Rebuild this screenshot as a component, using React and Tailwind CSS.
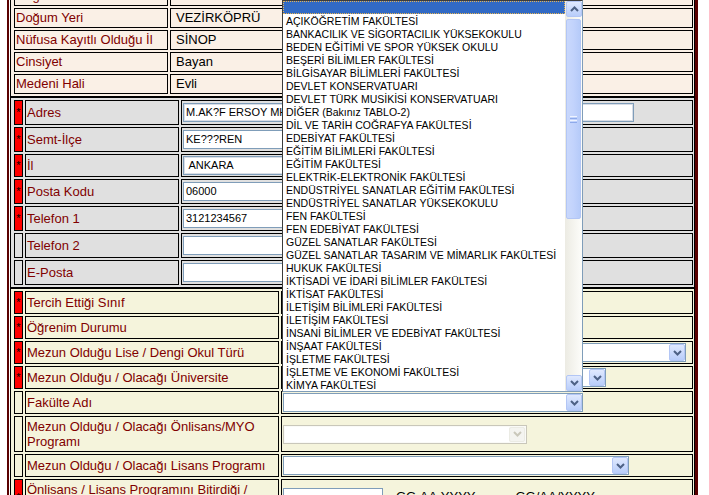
import React from "react";

const FACULTIES = [
  "",
  "AÇIKÖĞRETİM FAKÜLTESİ",
  "BANKACILIK VE SİGORTACILIK YÜKSEKOKULU",
  "BEDEN EĞİTİMİ VE SPOR YÜKSEK OKULU",
  "BEŞERİ BİLİMLER FAKÜLTESİ",
  "BİLGİSAYAR BİLİMLERİ FAKÜLTESİ",
  "DEVLET KONSERVATUARI",
  "DEVLET TÜRK MUSİKİSİ KONSERVATUARI",
  "DİĞER (Bakınız TABLO-2)",
  "DİL VE TARİH COĞRAFYA FAKÜLTESİ",
  "EDEBİYAT FAKÜLTESİ",
  "EĞİTİM BİLİMLERİ FAKÜLTESİ",
  "EĞİTİM FAKÜLTESİ",
  "ELEKTRİK-ELEKTRONİK FAKÜLTESİ",
  "ENDÜSTRİYEL SANATLAR EĞİTİM FAKÜLTESİ",
  "ENDÜSTRİYEL SANATLAR YÜKSEKOKULU",
  "FEN FAKÜLTESİ",
  "FEN EDEBİYAT FAKÜLTESİ",
  "GÜZEL SANATLAR FAKÜLTESİ",
  "GÜZEL SANATLAR TASARIM VE MİMARLIK FAKÜLTESİ",
  "HUKUK FAKÜLTESİ",
  "İKTİSADİ VE İDARİ BİLİMLER FAKÜLTESİ",
  "İKTİSAT FAKÜLTESİ",
  "İLETİŞİM BİLİMLERİ FAKÜLTESİ",
  "İLETİŞİM FAKÜLTESİ",
  "İNSANİ BİLİMLER VE EDEBİYAT FAKÜLTESİ",
  "İNŞAAT FAKÜLTESİ",
  "İŞLETME FAKÜLTESİ",
  "İŞLETME VE EKONOMİ FAKÜLTESİ",
  "KİMYA FAKÜLTESİ",
];

const PERSONAL = [
  ["Doğum Tarihi", "10.02.1987"],
  ["Doğum Yeri", "VEZİRKÖPRÜ"],
  ["Nüfusa Kayıtlı Olduğu İl", "SİNOP"],
  ["Cinsiyet", "Bayan"],
  ["Medeni Hali", "Evli"],
];

const CONTACT = [
  { label: "Adres", req: true, h: "h-[25px]", value: "M.AK?F ERSOY MH", w: "w-[451px]", dbl: true },
  { label: "Semt-İlçe", req: true, h: "h-[25px]", value: "KE???REN", w: "w-[200px]" },
  { label: "İl", req: true, h: "h-[23px]", value: " ANKARA", w: "w-[200px]", dbl: true },
  { label: "Posta Kodu", req: true, h: "h-[25px]", value: "06000", w: "w-[200px]" },
  { label: "Telefon 1", req: true, h: "h-[25px]", value: "3121234567", w: "w-[200px]" },
  { label: "Telefon 2", req: false, h: "h-[25px]", value: "", w: "w-[200px]" },
  { label: "E-Posta", req: false, h: "h-[25px]", value: "", w: "w-[200px]" },
];

const EDUCATION = [
  { label: "Tercih Ettiği Sınıf", req: true, h: "h-[23px]", sel: "w-[160px]" },
  { label: "Öğrenim Durumu", req: true, h: "h-[23px]", sel: "w-[160px]" },
  { label: "Mezun Olduğu Lise / Dengi Okul Türü", req: true, h: "h-[23px]", sel: "w-[403px]" },
  { label: "Mezun Olduğu / Olacağı Üniversite", req: true, h: "h-[23px]", sel: "w-[323px]" },
  { label: "Fakülte Adı", req: false, h: "h-[23px]", sel: "w-[300px]" },
  { label: "Mezun Olduğu / Olacağı Önlisans/MYO Programı", req: false, h: "h-[36px]", sel: "w-[244px]", disabled: true },
  { label: "Mezun Olduğu / Olacağı Lisans Programı", req: false, h: "h-[23px]", sel: "w-[346px]" },
];

function Chevron({ up, color }) {
  return (
    <svg width="9" height="6" viewBox="0 0 9 6">
      <polyline
        points={up ? "1,5 4.5,1.5 8,5" : "1,1 4.5,4.5 8,1"}
        fill="none"
        stroke={color}
        strokeWidth="2"
      />
    </svg>
  );
}

function ArrowBtn({ up, disabled }) {
  return (
    <div
      className={
        disabled
          ? "flex h-full w-[16px] items-center justify-center rounded-[2px] border border-[#ebebe4] bg-[#f4f4f0]"
          : "flex h-full w-[16px] items-center justify-center rounded-[2px] border border-[#b3c6f5] bg-gradient-to-b from-[#e0e9fe] to-[#b8cdfa]"
      }
    >
      <Chevron up={up} color={disabled ? "#cac8bb" : "#4d6185"} />
    </div>
  );
}

function Select({ w, disabled }) {
  return (
    <div
      className={`flex h-[19px] ${w} items-stretch border ${
        disabled ? "border-[#c9c7ba] bg-[#fafaf7] p-[1px]" : "border-[#7f9db9] bg-white"
      }`}
    >
      <div className={disabled ? "flex-1 bg-white" : "flex-1"} />
      <ArrowBtn disabled={disabled} />
    </div>
  );
}

function Input({ w, value, dbl }) {
  return (
    <div
      className={`flex h-[19px] ${w} items-center whitespace-pre border border-[#7f9db9] bg-white pl-[2px] text-[11px] text-black ${
        dbl ? "shadow-[inset_0_0_0_1px_#d8dde6]" : ""
      }`}
    >
      {value}
    </div>
  );
}

function Marker({ req, bg }) {
  return (
    <div
      className={`flex w-[9px] shrink-0 items-center justify-center border border-black text-[11px] leading-none text-black ${
        req ? "bg-[#ff0000]" : bg
      }`}
    >
      {req ? "*" : ""}
    </div>
  );
}

function DropList() {
  return (
    <div className="absolute left-[282px] top-0 flex h-[392px] w-[301px] border border-[#7f9db9] border-l-[#3c3c3c] border-t-[#3c3c3c] bg-white">
      <div className="flex flex-1 flex-col text-[10.5px] text-black">
        {FACULTIES.map((f, i) => (
          <div
            key={i}
            className={
              i === 0
                ? "h-[13px] border border-dotted border-[#e6b452] bg-[#316ac5] pl-[2px] leading-[11px]"
                : "h-[13px] whitespace-nowrap pl-[3px] leading-[15px]"
            }
          >
            {f}
          </div>
        ))}
      </div>
      {/* scrollbar */}
      <div className="flex w-[17px] flex-col bg-gradient-to-r from-[#ecebe3] to-[#fdfdfa] px-[1px]">
        <div className="h-[16px]">
          <ArrowBtn up />
        </div>
        <div className="mt-[2px] flex h-[200px] items-center justify-center rounded-[2px] border border-[#b3c6f5] bg-gradient-to-r from-[#c9d8fc] via-[#c2d3fc] to-[#b6cbf9]">
          <div className="flex flex-col gap-[1px]">
            <div className="h-[1px] w-[7px] bg-[#eef3fe]" />
            <div className="h-[1px] w-[7px] bg-[#8eaaea]" />
            <div className="h-[1px] w-[7px] bg-[#eef3fe]" />
            <div className="h-[1px] w-[7px] bg-[#8eaaea]" />
          </div>
        </div>
        <div className="flex-1" />
        <div className="h-[16px]">
          <ArrowBtn />
        </div>
      </div>
    </div>
  );
}

export default function App() {
  return (
    <div className="relative h-[495px] w-[709px] overflow-hidden bg-white font-['Liberation_Sans',Arial,sans-serif] text-[13px]">
      <div className="-mt-[17px] ml-[7px] w-[691px] border-l-2 border-r-[3px] border-[#5a0000] pb-[40px] pl-[1px]">
        {/* personal info */}
        <div className="flex flex-col gap-[2px] border border-black bg-[#faf0e6] py-[2px] pl-[3px] pr-[1px]">
          {PERSONAL.map(([label, value]) => (
            <div key={label} className="flex h-[20px] gap-[2px]">
              <div className="flex w-[154px] items-center border border-black pl-[1px] text-[#800000]">{label}</div>
              <div className="flex flex-1 items-center border border-black pl-[5px] text-black">{value}</div>
            </div>
          ))}
        </div>

        {/* contact */}
        <div className="flex flex-col gap-[2px] border border-black bg-[#e0e0e0] py-[2px] pl-[3px] pr-[1px]">
          {CONTACT.map((r) => (
            <div key={r.label} className={`flex ${r.h} gap-[2px]`}>
              <Marker req={r.req} bg="bg-[#e0e0e0]" />
              <div className="flex w-[154px] items-center border border-black pl-[1px] text-[#800000]">{r.label}</div>
              <div className="flex flex-1 items-center border border-black pl-[1px]">
                <Input w={r.w} value={r.value} dbl={r.dbl} />
              </div>
            </div>
          ))}
        </div>

        {/* education */}
        <div className="flex flex-col gap-[2px] border border-black bg-[#f5f4dc] py-[2px] pl-[3px] pr-[1px]">
          {EDUCATION.map((r) => (
            <div key={r.label} className={`flex ${r.h} gap-[2px]`}>
              <Marker req={r.req} bg="bg-[#f5f4dc]" />
              <div className="flex w-[254px] items-center border border-black pl-[1px] leading-[15px] text-[#800000]">
                {r.label}
              </div>
              <div className="flex flex-1 items-center border border-black pl-[1px]">
                <Select w={r.sel} disabled={r.disabled} />
              </div>
            </div>
          ))}
          <div className="flex h-[36px] gap-[2px]">
            <Marker req bg="bg-[#f5f4dc]" />
            <div className="flex w-[254px] items-center border border-black pl-[1px] leading-[15px] text-[#800000]">
              Önlisans / Lisans Programını Bitirdiği / Bitireceği Tarih
            </div>
            <div className="flex flex-1 items-center border border-black pl-[1px] text-black">
              <Input w="w-[100px]" value="" />
              <span className="ml-[13px]">GG.AA.YYYY</span>
              <span className="ml-[40px]">GG/AA/YYYY</span>
            </div>
          </div>
        </div>
      </div>
      <DropList />
    </div>
  );
}
